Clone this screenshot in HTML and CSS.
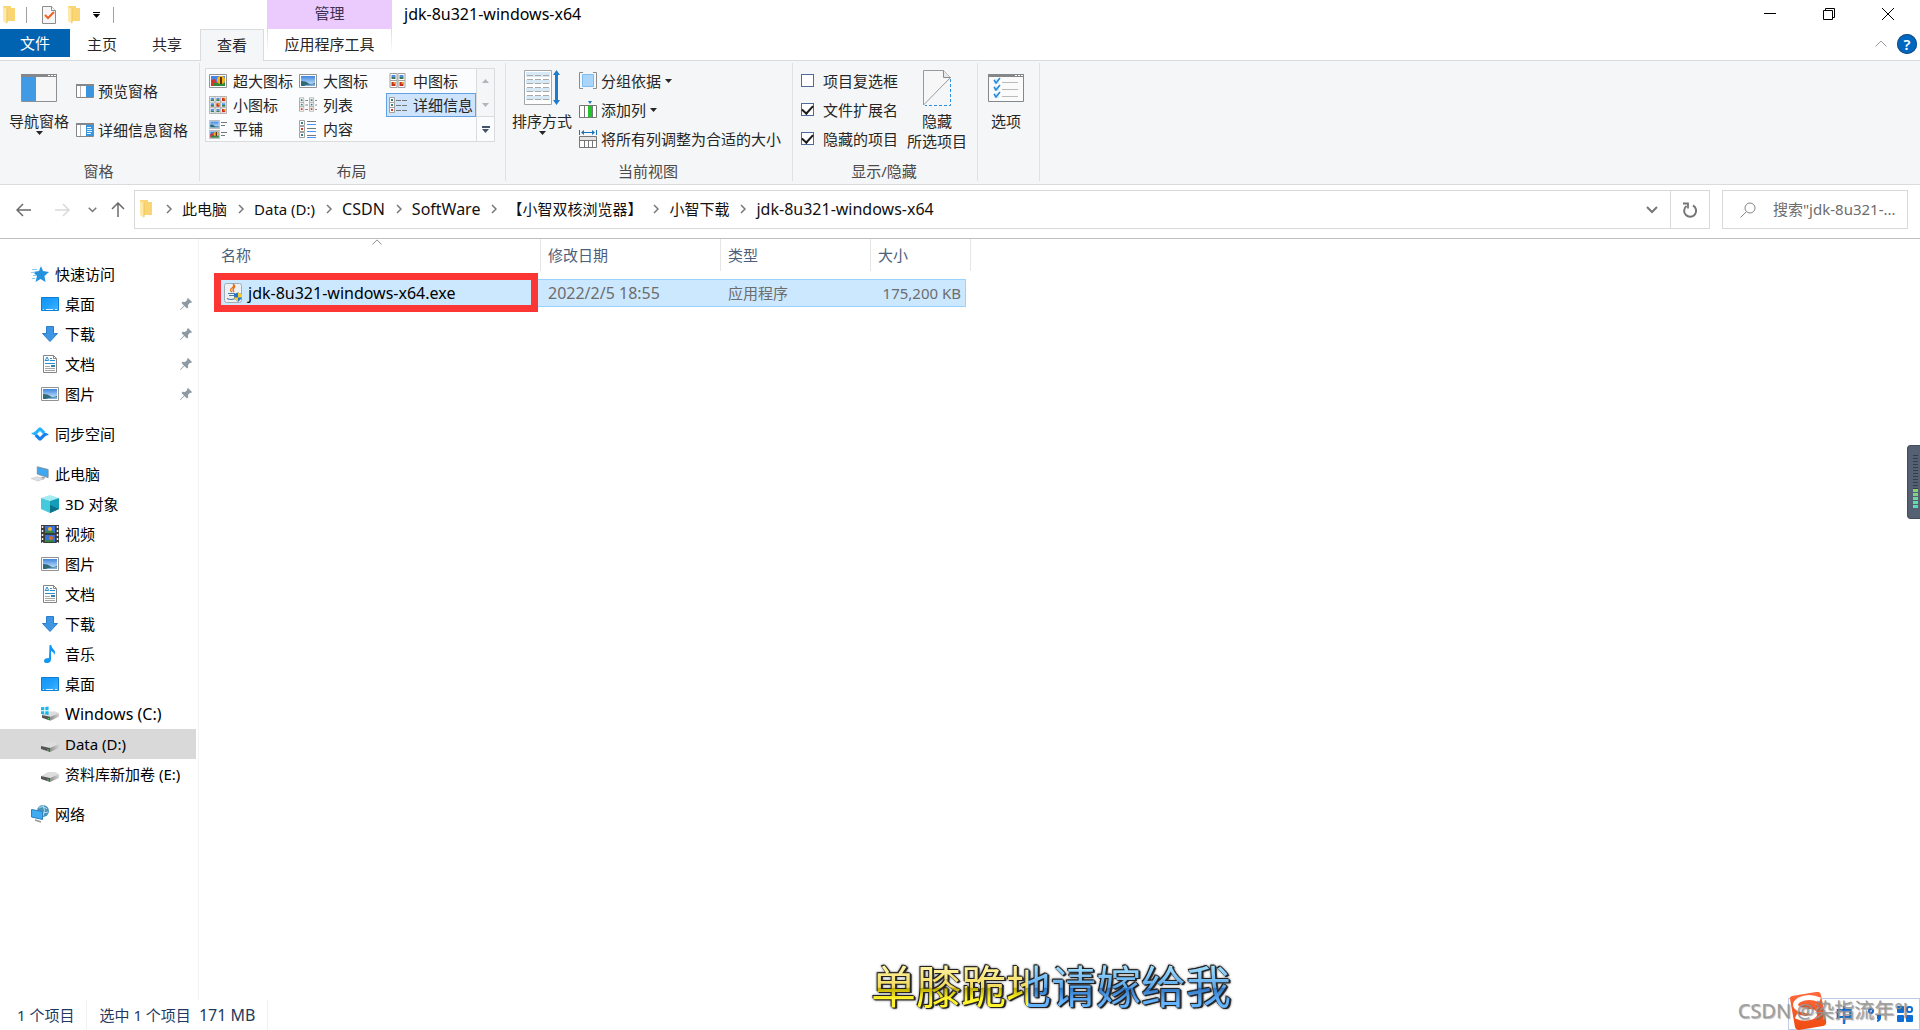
FILE: index.html
```html
<!DOCTYPE html>
<html lang="zh-CN">
<head>
<meta charset="utf-8">
<title>jdk-8u321-windows-x64</title>
<link rel="stylesheet" href="styles.css">
</head>
<body>
<svg class="sprite" aria-hidden="true">
  <defs>
    <linearGradient id="g-sky" x1="0" x2="0" y1="0" y2="1"><stop offset="0" stop-color="#3f86dd"/><stop offset="1" stop-color="#d8efff"/></linearGradient>
    <linearGradient id="g-desk" x1="0" x2="1" y1="0" y2="1"><stop offset="0" stop-color="#1493f5"/><stop offset="0.5" stop-color="#1fa0fc"/><stop offset="1" stop-color="#45b4ff"/></linearGradient>
    <linearGradient id="g-drive" x1="0" x2="1"><stop offset="0" stop-color="#8c8c8c"/><stop offset="1" stop-color="#d4d4d4"/></linearGradient>
    <linearGradient id="g-logo" x1="0" x2="0" y1="0" y2="1"><stop offset="0" stop-color="#ff6a3c"/><stop offset="1" stop-color="#f04a12"/></linearGradient>
  </defs>
  <symbol id="folder" viewBox="0 0 12 18"><path d="M0 0h8v2h4v13H0z" fill="#f9d673"/><path d="M0 1l4 2v15l-4-3z" fill="#ffe9a8"/><path d="M4 3v14" stroke="#eec45a"/></symbol>
  <symbol id="doc-check" viewBox="0 0 14 18"><path d="M.5.5h9l4 4v13H.5z" fill="#f6f6f6" stroke="#8c8c8c"/><path d="M9.500.5v4h4" fill="#fff" stroke="#8c8c8c"/><path d="M3 9l3 3 6-6" fill="none" stroke="#ee6220" stroke-width="2"/></symbol>
  <symbol id="caret" viewBox="0 0 7 4"><path d="M0 0h7L3.500 4z" fill="currentColor"/></symbol>
  <symbol id="chev-right" viewBox="0 0 6 10"><path d="M1 1l4 4-4 4" fill="none" stroke="#777" stroke-width="1.500"/></symbol>
  <symbol id="chev-down" viewBox="0 0 12 8"><path d="M1 1l5 5 5-5" fill="none" stroke="#777" stroke-width="2"/></symbol>
  <symbol id="chev-up" viewBox="0 0 12 7"><path d="M.5 6.500L6 1l5.500 5.500" fill="none" stroke="currentColor"/></symbol>
  <symbol id="arrow" viewBox="0 0 16 14"><path d="M1 7h14M7 1L1 7l6 6" fill="none" stroke="currentColor" stroke-width="1.500"/></symbol>
  <symbol id="nav-pane" viewBox="0 0 36 28"><path d="M.5.5h35v27H.5z" fill="#f7f7f7" stroke="#8d8f92"/><path d="M0 0h36v3H0z" fill="#85878a"/><path d="M27 1h2v1h-2zM30 1h2v1h-2zM33 1h2v1h-2z" fill="#fff"/><path d="M1 3h14v24H1z" fill="#419be4"/></symbol>
  <symbol id="pane-prev" viewBox="0 0 18 14"><path d="M.5.5h17v13H.5z" fill="#fff" stroke="#85878a"/><path d="M0 0h18v2H0z" fill="#85878a"/><path d="M4.500 2v11" stroke="#b5b5b5"/><path d="M10 2h7v11h-7z" fill="#3a94de"/></symbol>
  <symbol id="pane-det" viewBox="0 0 18 14"><use href="#pane-prev"/><path d="M11 4.500h4M11 6.500h5M11 8.500h5M11 10.500h4" stroke="#e5f4ff"/></symbol>
  <symbol id="picture" viewBox="0 0 18 14"><path d="M.5.5h17v13H.5z" fill="#fff" stroke="#929292"/><path d="M2 2h14v10H2z" fill="url(#g-sky)"/><path d="M2 7q5 0 7 2t7 0v3H2z" fill="#2e6a78"/><path d="M7 11l9-1v2H5z" fill="#7fb1d8"/></symbol>
  <symbol id="huge" viewBox="0 0 18 14"><path d="M.5.5h17v13H.5z" fill="#fff" stroke="#929292"/><path d="M2 2h14v10H2z" fill="#4785ec"/><path d="M2 6l4-1 2 4v3H2z" fill="#d4372c"/><path d="M5 9h11v3H5z" fill="#318c3a"/><circle cx="12" cy="6" r="4" fill="#f6b716"/><path d="M11 3h2v7h-2z" fill="#5c2b12"/></symbol>
  <symbol id="thumb" viewBox="0 0 8 8"><path d="M.5.500h7v7h-7z" fill="#fff" stroke="#a0a0a0"/><path d="M2 2h4v2H2z" fill="#4c8fe0"/><path d="M2 4h4v2H2z" fill="#3b7b60"/></symbol>
  <symbol id="thumb-r" viewBox="0 0 8 8"><path d="M.5.500h7v7h-7z" fill="#fff" stroke="#a0a0a0"/><path d="M2 2h4v4H2z" fill="#c92e20"/><path d="M4 2h2v2H4z" fill="#e8a126"/></symbol>
  <symbol id="medium" viewBox="0 0 18 16"><use href="#thumb" width="9" height="8"/><use href="#thumb" x="8" width="9" height="8"/><use href="#thumb-r" y="7" width="9" height="8"/><use href="#thumb-r" x="8" y="7" width="9" height="8"/></symbol>
  <symbol id="small" viewBox="0 0 19 19"><use href="#thumb" width="7" height="7"/><use href="#thumb" x="6" width="7" height="7"/><use href="#thumb-r" x="12" width="7" height="7"/><use href="#thumb" y="6" width="7" height="7"/><use href="#thumb-r" x="6" y="6" width="7" height="7"/><use href="#thumb" x="12" y="6" width="7" height="7"/><use href="#thumb" y="12" width="7" height="7"/><use href="#thumb" x="6" y="12" width="7" height="7"/><use href="#thumb-r" x="12" y="12" width="7" height="7"/></symbol>
  <symbol id="mini" viewBox="0 0 6 6"><path d="M.5.500h5v5h-5z" fill="#fff" stroke="#a0a0a0"/><path d="M2 2h2v2H2z" fill="#3b7f80"/></symbol>
  <symbol id="mini-r" viewBox="0 0 6 6"><path d="M.5.500h5v5h-5z" fill="#fff" stroke="#a0a0a0"/><path d="M2 2h2v2H2z" fill="#c9401f"/></symbol>
  <symbol id="list" viewBox="0 0 20 17"><use href="#mini" width="6" height="6"/><use href="#mini" y="5" width="6" height="6"/><use href="#mini-r" y="10" width="6" height="6"/><use href="#mini" x="11" width="6" height="6"/><use href="#mini" x="11" y="5" width="6" height="6"/><use href="#mini-r" x="11" y="10" width="6" height="6"/><path d="M7 3.500h3M7 8.500h3M7 13.500h3M18 3.500h2M18 8.500h2M18 13.500h2" stroke="#777"/></symbol>
  <symbol id="details" viewBox="0 0 18 17"><use href="#mini" width="6" height="6"/><use href="#mini" y="5" width="6" height="6"/><use href="#mini-r" y="10" width="6" height="6"/><path d="M7 3.500h5M13 3.500h5M7 8.500h5M13 8.500h5M7 13.500h5M13 13.500h5" stroke="#777"/></symbol>
  <symbol id="tiles" viewBox="0 0 18 19"><use href="#picture" width="11" height="9"/><use href="#huge" y="10" width="11" height="9"/><path d="M12 2.500h6M12 5.500h4M12 12.500h6M12 15.500h4" stroke="#777"/></symbol>
  <symbol id="content" viewBox="0 0 18 19"><use href="#mini" width="6" height="6"/><use href="#mini-r" y="6" width="6" height="6"/><use href="#mini" y="12" width="6" height="6"/><path d="M8 1.500h9M8 8.500h9M8 15.500h9" stroke="#777"/><path d="M8 4.500h9M8 11.500h9M8 17.500h9" stroke="#4c93f5"/></symbol>
  <symbol id="sort" viewBox="0 0 36 36"><path d="M.5.500h27v34H.5z" fill="#fff" stroke="#a4a6a8"/><path d="M2 2h24v5H2zM2 10h24v4H2zM2 18h24v4H2zM2 26h24v4H2z" fill="#d7e9f4"/><path d="M3 5.500h22M3 9.500h22M3 13.500h22M3 17.500h22M3 21.500h22M3 25.500h22M3 29.500h22" stroke="#aaa" stroke-dasharray="6 2"/><path d="M32.500 0L36 5h-2v25h2l-3.500 5L29 30h2V5h-2z" fill="#217bcd"/></symbol>
  <symbol id="group" viewBox="0 0 18 17"><path d="M4 .5H.5v16H4M14 .5h3.500v16H14" fill="none" stroke="#8c8c8c"/><path d="M3.500 2.500h11v12h-11z" fill="#a9d5fa" stroke="#7dbdf0"/></symbol>
  <symbol id="addcol" viewBox="0 0 18 17"><path d="M9 0h4l-2 3z" fill="#1d74b8"/><path d="M.5 4.500h17v12H.5zM5.500 4.500v12M9.500 4.500v12M13.500 4.500v12" fill="#fff" stroke="#777"/><path d="M9 5h4v11H9z" fill="#22c32c"/></symbol>
  <symbol id="fitcol" viewBox="0 0 18 18"><path d="M.5 0v5M17.500 0v5M3 2.500h12" stroke="#1d74b8"/><path d="M5 0v5L2 2.500zM13 0v5l3-2.500z" fill="#1d74b8"/><path d="M.5 6.500h17v11H.5zM.5 10.500h17M5.500 11v6M9.500 11v6M13.500 11v6" fill="#fff" stroke="#777"/><path d="M1 7h16v3H1z" fill="#e3e3e3"/></symbol>
  <symbol id="hide" viewBox="0 0 28 36"><path d="M20.500.500H.5V35L27.500 8z" fill="#f7f7f7"/><path d="M.5 35V.5h20l7 7L.5 35" fill="none" stroke="#9a9a9a"/><path d="M20.500.500v7h7" fill="#e8e8e8" stroke="#8c8c8c"/><path d="M27.500 9v26.500H2" fill="none" stroke="#2b8fe0" stroke-dasharray="3 2"/></symbol>
  <symbol id="options" viewBox="0 0 36 28"><path d="M.5.500h35v27H.5z" fill="#fbfbfb" stroke="#85878a"/><path d="M0 0h36v3H0z" fill="#85878a"/><path d="M27 1h2v1h-2zM30 1h2v1h-2zM33 1h2v1h-2z" fill="#fff"/><path d="M6 5h5v5H6zM6 12h5v5H6zM6 19h5v5H6z" fill="#d6ebfb"/><path d="M6 6l2 3 4-5M6 13l2 3 4-5M6 20l2 3 4-5" fill="none" stroke="#2787d8" stroke-width="1.500"/><path d="M14 8.500h16M14 15.500h16M14 22.500h16" stroke="#bbb"/></symbol>
  <symbol id="star" viewBox="0 0 18 16"><path d="M10 0l2 5 6 1-4.500 4 1 6-5-3-5 3 1.500-6L2 6l6-1z" fill="#2592dd"/><path d="M1 3.500h5M0 6.500h4M2 9.500h3M1 12.500h3" stroke="#8ccbf3"/></symbol>
  <symbol id="desktop" viewBox="0 0 18 14"><path d="M.5.500h17v13H.5z" fill="url(#g-desk)" stroke="#0d7ed6"/><path d="M2 12.500h1M5 12.500h7M14 12.500h2" stroke="#dff2ff"/></symbol>
  <symbol id="download" viewBox="0 0 18 18"><path d="M5.500 1.500h7v7h4L9 16.500 1.500 8.500h4z" fill="#3e95e4" stroke="#2b7ccb"/></symbol>
  <symbol id="document" viewBox="0 0 16 18"><path d="M1.500.500h10l3 3v14h-13z" fill="#fff" stroke="#858585"/><path d="M11.500.500v3h3" fill="none" stroke="#858585"/><path d="M3 5.500h3M8 3.500h2M8 5.500h5M3 8.500h10" stroke="#2a8fd6"/><path d="M3 6l2-4 2 4" fill="none" stroke="#2a8fd6"/><path d="M3 11.500h5M3 13.500h10M3 15.500h10" stroke="#a5a5a5"/><path d="M9 10h4v2H9z" fill="#3a7fa8"/></symbol>
  <symbol id="sync" viewBox="0 0 18 14"><path d="M0 6q3 0 4.500-2L7.500 1Q9-.5 10.500 1l4 4-2.500 2-3-3-4 4Q3 9 0 6z" fill="#28b3fb"/><path d="M18 8q-3 0-4.500 2l-3 3q-1.500 1.500-3 0l-4-4L6 7l3 3 4-4q2-1 5 2z" fill="#187ff0"/></symbol>
  <symbol id="pc" viewBox="0 0 20 18"><path d="M7 1l12 3v9L7 9z" fill="#3fa8f0" stroke="#7d8c99"/><path d="M12 12l4 1-2 2h-4z" fill="#9aa0a5"/><path d="M0 14l7-2 7 2-6 3z" fill="#dcdfe2" stroke="#b9bdc1" stroke-width=".5"/></symbol>
  <symbol id="cube" viewBox="0 0 18 18"><path d="M0 3l9-3 9 3-9 3z" fill="#a6eaf2"/><path d="M0 3l9 3v12l-9-4z" fill="#45c9dd"/><path d="M18 3L9 6v12l9-4z" fill="#139db8"/><path d="M9 10l9 4-9 4z" fill="#0b7289"/></symbol>
  <symbol id="video" viewBox="0 0 18 18"><path d="M0 0h18v18H0z" fill="#3c3c3c"/><path d="M4 1h10v7H4zM4 10h10v7H4z" fill="#3773d9"/><path d="M5 6h8v2H5zM5 15h8v2H5z" fill="#2f8742"/><circle cx="9" cy="4" r="2" fill="#f0b31d"/><circle cx="10" cy="13" r="2" fill="#dc6a1e"/><path d="M1.500 1v17M16.500 1v17" stroke="#eee" stroke-width="1.500" stroke-dasharray="2 2"/></symbol>
  <symbol id="music" viewBox="0 0 18 18"><path d="M8.500 0h1.500q1 3 3 5t0 5q0-3-3-4v8q0 4-4 4-3 0-3-2 0-3 5-3z" fill="#0f97f5"/></symbol>
  <symbol id="drive" viewBox="0 0 18 10"><path d="M0 4l7-4h7l4 2-9 4z" fill="#ddd"/><path d="M0 4l9 2v4L0 7z" fill="#555"/><path d="M9 6l9-4v4l-9 4z" fill="url(#g-drive)"/><circle cx="7" cy="8" r=".8" fill="#3fe04a"/></symbol>
  <symbol id="drive-win" viewBox="0 0 19 16"><use href="#drive" x="1" y="5" width="18" height="10"/><path d="M0 1l3.500-.5v3.500H0zM4.500.500L8 0v4H4.500zM0 5h3.500v3.500L0 8zM4.500 5H8v4l-3.500-.5z" fill="#17b7ec"/></symbol>
  <symbol id="network" viewBox="0 0 18 18"><circle cx="12" cy="6" r="6" fill="#4b92b9"/><path d="M8 3q4-3 8 1M7 7q5 2 10 0M12 0q3 5 0 11" fill="none" stroke="#b9dced"/><path d="M.5 4.500l11 2v8L.5 12z" fill="#3fabf2" stroke="#2981bd"/><path d="M4 15l6 2" stroke="#999" stroke-width="1.500"/></symbol>
  <symbol id="pin" viewBox="0 0 12 12"><path d="M8 0l4 4-1 1-1-.3L8 7l.2 2.500L7 10.500 4.500 8 .5 12 0 11.500 4 7.500 1.500 5l1-1.200L5 4l2.300-2L7 1z" fill="#8d99a3"/></symbol>
  <symbol id="java" viewBox="0 0 18 20"><rect x=".5" y=".5" width="17" height="19" rx="2" fill="#eef1f4" stroke="#a3adb8"/><path d="M8 9Q5 7 8 5t1-4q3 2 1 4t0 4" fill="none" stroke="#e76f1c" stroke-width="1.300"/><path d="M4 10.500h7M5 12.500h5M3 15.500q4 2 8 0" fill="none" stroke="#4e7ba5" stroke-width="1.200"/><path d="M10 11l4-1.500 4 1.500v4l-4 4-4-4z" fill="#2576c8"/><path d="M14 9.500l4 1.500v3.500h-4zM10 14.500h4V19l-4-4z" fill="#f8cb2e"/></symbol>
  <symbol id="search" viewBox="0 0 16 16"><circle cx="10" cy="6" r="5" fill="none" stroke="#858585"/><path d="M6.500 9.500L.5 15.500" stroke="#858585"/></symbol>
  <symbol id="refresh" viewBox="0 0 16 16"><path d="M11 3.500a6 6 0 1 1-6.500.5" fill="none" stroke="#757575" stroke-width="2"/><path d="M1 1.500h5v5" fill="none" stroke="#757575" stroke-width="1.800"/></symbol>
</svg>

<header class="titlebar">
  <div class="quick">
    <svg class="i12x18"><use href="#folder"/></svg>
    <span class="vbar"></span>
    <button class="plain" aria-label="属性"><svg class="i14x18"><use href="#doc-check"/></svg></button>
    <button class="plain" aria-label="新建文件夹"><svg class="i12x18"><use href="#folder"/></svg></button>
    <button class="plain customize" aria-label="自定义快速访问工具栏"><svg class="caret"><use href="#caret"/></svg></button>
    <span class="vbar last"></span>
  </div>
  <div class="context">管理</div>
  <div class="caption">
    <h1>jdk-8u321-windows-x64</h1>
    <div class="controls">
      <button class="plain" aria-label="最小化"><svg width="12" height="12"><path d="M0 5.500h12" stroke="#000"/></svg></button>
      <button class="plain" aria-label="还原"><svg width="12" height="12"><path d="M.5 2.500h9v9h-9zM2.500 2.500v-2h9v9h-2" fill="none" stroke="#000"/></svg></button>
      <button class="plain" aria-label="关闭"><svg width="12" height="12"><path d="M0 0l12 12M12 0L0 12" stroke="#000"/></svg></button>
    </div>
  </div>
  <button class="tab file">文件</button>
  <button class="tab">主页</button>
  <button class="tab">共享</button>
  <button class="tab active">查看</button>
  <span class="line"></span>
  <button class="tab tool">应用程序工具</button>
  <div class="help">
    <button class="plain fold" aria-label="折叠功能区"><svg class="i12x7"><use href="#chev-up"/></svg></button>
    <button class="question" aria-label="帮助">?</button>
  </div>
</header>

<section class="ribbon">
  <div class="group g-panes">
    <div class="body">
      <button class="big"><span class="pic"><svg width="36" height="28"><use href="#nav-pane"/></svg></span>导航窗格<svg class="caret"><use href="#caret"/></svg></button>
      <div class="stack wide">
        <button class="row"><svg width="18" height="14"><use href="#pane-prev"/></svg>预览窗格</button>
        <button class="row"><svg width="18" height="14"><use href="#pane-det"/></svg>详细信息窗格</button>
      </div>
    </div>
    <div class="label">窗格</div>
  </div>
  <div class="group g-layout">
    <div class="body">
      <div class="gallery">
        <button><svg width="18" height="14"><use href="#huge"/></svg>超大图标</button>
        <button><svg width="18" height="14"><use href="#picture"/></svg>大图标</button>
        <button><svg width="18" height="16"><use href="#medium"/></svg>中图标</button>
        <button><svg width="18" height="18"><use href="#small"/></svg>小图标</button>
        <button><svg width="18" height="16"><use href="#list"/></svg>列表</button>
        <button class="on"><svg width="18" height="17"><use href="#details"/></svg>详细信息</button>
        <button><svg width="18" height="19"><use href="#tiles"/></svg>平铺</button>
        <button><svg width="18" height="19"><use href="#content"/></svg>内容</button>
      </div>
      <div class="spin">
        <button aria-label="上一行"><svg class="caret flip"><use href="#caret"/></svg></button>
        <button aria-label="下一行"><svg class="caret"><use href="#caret"/></svg></button>
        <button class="more" aria-label="更多"><svg class="caret"><use href="#caret"/></svg></button>
      </div>
    </div>
    <div class="label">布局</div>
  </div>
  <div class="group g-view">
    <div class="body">
      <button class="big"><span class="pic"><svg width="36" height="36"><use href="#sort"/></svg></span>排序方式<svg class="caret"><use href="#caret"/></svg></button>
      <div class="stack">
        <button class="row"><svg width="18" height="17"><use href="#group"/></svg>分组依据<svg class="caret"><use href="#caret"/></svg></button>
        <button class="row"><svg width="18" height="17"><use href="#addcol"/></svg>添加列<svg class="caret"><use href="#caret"/></svg></button>
        <button class="row"><svg width="18" height="18"><use href="#fitcol"/></svg>将所有列调整为合适的大小</button>
      </div>
    </div>
    <div class="label">当前视图</div>
  </div>
  <div class="group g-show">
    <div class="body">
      <div class="stack">
        <label class="check"><input type="checkbox">项目复选框</label>
        <label class="check"><input type="checkbox" checked>文件扩展名</label>
        <label class="check"><input type="checkbox" checked>隐藏的项目</label>
      </div>
      <button class="big"><span class="pic"><svg width="28" height="36"><use href="#hide"/></svg></span><span>隐藏<br>所选项目</span></button>
    </div>
    <div class="label">显示/隐藏</div>
  </div>
  <div class="group g-options">
    <div class="body">
      <button class="big"><span class="pic"><svg width="36" height="28"><use href="#options"/></svg></span>选项</button>
    </div>
  </div>
</section>

<div class="address">
  <div class="history">
    <button class="plain" aria-label="后退"><svg width="16" height="14"><use href="#arrow"/></svg></button>
    <button class="plain off" aria-label="前进"><svg class="mirror" width="16" height="14"><use href="#arrow"/></svg></button>
    <button class="plain recent" aria-label="最近"><svg width="9" height="6"><use href="#chev-down"/></svg></button>
    <button class="plain up" aria-label="向上"><svg class="turn" width="16" height="14"><use href="#arrow"/></svg></button>
  </div>
  <div class="pathbox">
    <nav class="crumbs">
      <svg class="i12x18"><use href="#folder"/></svg>
      <svg class="sep first"><use href="#chev-right"/></svg><a href="#pc">此电脑</a>
      <svg class="sep"><use href="#chev-right"/></svg><a href="#d">Data (D:)</a>
      <svg class="sep"><use href="#chev-right"/></svg><a class="latin" href="#csdn">CSDN</a>
      <svg class="sep"><use href="#chev-right"/></svg><a class="latin" href="#soft">SoftWare</a>
      <svg class="sep"><use href="#chev-right"/></svg><a href="#browser">【小智双核浏览器】</a>
      <svg class="sep"><use href="#chev-right"/></svg><a href="#dl">小智下载</a>
      <svg class="sep"><use href="#chev-right"/></svg><a class="latin" href="#jdk">jdk-8u321-windows-x64</a>
    </nav>
    <button class="plain drop" aria-label="历史位置"><svg width="12" height="8"><use href="#chev-down"/></svg></button>
    <button class="plain refresh" aria-label="刷新"><svg width="16" height="16"><use href="#refresh"/></svg></button>
  </div>
  <label class="search"><svg width="16" height="16"><use href="#search"/></svg><input type="text" aria-label="搜索" placeholder="搜索&quot;jdk-8u321-..."></label>
</div>

<main class="content">
  <nav class="tree">
    <a class="root" href="#quick"><svg width="18" height="16"><use href="#star"/></svg>快速访问</a>
    <a href="#q1"><svg width="18" height="14"><use href="#desktop"/></svg>桌面<svg class="pin"><use href="#pin"/></svg></a>
    <a href="#q2"><svg width="18" height="18"><use href="#download"/></svg>下载<svg class="pin"><use href="#pin"/></svg></a>
    <a href="#q3"><svg width="18" height="18"><use href="#document"/></svg>文档<svg class="pin"><use href="#pin"/></svg></a>
    <a href="#q4"><svg width="18" height="14"><use href="#picture"/></svg>图片<svg class="pin"><use href="#pin"/></svg></a>
    <a class="root" href="#sync"><svg width="18" height="14"><use href="#sync"/></svg>同步空间</a>
    <a class="root" href="#pc"><svg width="18" height="18"><use href="#pc"/></svg>此电脑</a>
    <a href="#p1"><svg width="18" height="18"><use href="#cube"/></svg>3D 对象</a>
    <a href="#p2"><svg width="18" height="18"><use href="#video"/></svg>视频</a>
    <a href="#p3"><svg width="18" height="14"><use href="#picture"/></svg>图片</a>
    <a href="#p4"><svg width="18" height="18"><use href="#document"/></svg>文档</a>
    <a href="#p5"><svg width="18" height="18"><use href="#download"/></svg>下载</a>
    <a href="#p6"><svg width="18" height="18"><use href="#music"/></svg>音乐</a>
    <a href="#p7"><svg width="18" height="14"><use href="#desktop"/></svg>桌面</a>
    <a class="latin" href="#p8"><svg width="18" height="16"><use href="#drive-win"/></svg>Windows (C:)</a>
    <a class="current" href="#p9"><svg class="low" width="18" height="10"><use href="#drive"/></svg>Data (D:)</a>
    <a href="#p10"><svg class="low" width="18" height="10"><use href="#drive"/></svg>资料库新加卷 (E:)</a>
    <a class="root" href="#net"><svg width="18" height="18"><use href="#network"/></svg>网络</a>
  </nav>
  <section class="files">
    <table>
      <colgroup><col class="c-name"><col class="c-date"><col class="c-type"><col class="c-size"></colgroup>
      <thead>
        <tr><th>名称<svg class="sorted"><use href="#chev-up"/></svg></th><th>修改日期</th><th>类型</th><th>大小</th></tr>
      </thead>
      <tbody>
        <tr>
          <td><div class="cell name latin"><svg width="18" height="20"><use href="#java"/></svg>jdk-8u321-windows-x64.exe<span class="mark"></span></div></td>
          <td><div class="cell latin">2022/2/5 18:55</div></td>
          <td><div class="cell">应用程序</div></td>
          <td><div class="cell size">175,200 KB</div></td>
        </tr>
      </tbody>
    </table>
  </section>
</main>

<footer class="status"><span>1 个项目</span><span class="picked">选中 1 个项目</span><span class="bytes latin">171 MB</span></footer>

<div class="lyric">单膝跪地请嫁给我</div>
<div class="meter"><span class="idle"></span><span class="level"></span></div>
<div class="ime">
  <svg class="logo" viewBox="0 0 40 38"><path d="M3 7Q2 5 5 4L29 0q4-1 5 3l5 26q1 4-3 5l-24 4q-3 0-4-3z" fill="url(#g-logo)"/><path d="M33 8Q22 3 12 8q-7 5 0 9 6 2 14 3 4 2-1 5-8 3-16-1" fill="none" stroke="#fff" stroke-width="5"/></svg>
  <span class="zh">中</span>
  <svg class="punct" width="16" height="16"><circle cx="4" cy="5" r="2" fill="none" stroke="#0b6fd8" stroke-width="2"/><path d="M10 9h4v3q0 3-4 4v-2l1-1h-1z" fill="#0b6fd8"/></svg>
  <svg class="apps" width="16" height="16"><rect width="7" height="7" rx="1" fill="#0b6fd8"/><rect y="9" width="7" height="7" rx="1" fill="#0b6fd8"/><rect x="9" y="9" width="7" height="7" rx="1" fill="#0b6fd8"/><rect x="10" y="1" width="5" height="5" rx="2" fill="none" stroke="#0b6fd8" stroke-width="2"/></svg>
</div>
<div class="credit">CSDN @染指流年°l</div>
</body>
</html>
```
FILE: styles.css
```css
* { box-sizing: border-box; }
html, body { height: 100%; }
body {
  margin: 0;
  min-height: 100vh;
  display: flex;
  flex-direction: column;
  overflow: hidden;
  position: relative;
  background: #fff;
  color: #000;
  font: 15px/20px "Noto Sans", "Noto Sans CJK SC", sans-serif;
}
svg { flex: none; display: block; }
button, input { font: inherit; color: inherit; }
button { border: 0; padding: 0; margin: 0; background: none; white-space: nowrap; }
a { color: inherit; text-decoration: none; }
.latin { font-size: 16px; }
.sprite { position: absolute; width: 0; height: 0; }
.plain { display: flex; align-items: center; justify-content: center; }
.caret { width: 7px; height: 4px; }
.i12x18 { width: 12px; height: 18px; }
.i14x18 { width: 14px; height: 18px; }
.i12x7 { width: 12px; height: 7px; }

/* Title bar and tabs */
.titlebar {
  flex: none;
  display: grid;
  grid-template-columns: 70px 64px 66px 64px 3px 125px 1fr;
  grid-template-rows: 29px 32px;
}
.quick { grid-column: 1 / 6; display: flex; align-items: center; padding-left: 3px; }
.vbar { width: 1px; height: 16px; margin: 0 15px 0 11px; background: #a0a0a0; }
.quick .plain + .plain { margin-left: 12px; }
.quick .customize { width: 7px; height: 6px; border-top: 1px solid #000; align-items: end; }
.quick .plain + .customize { margin-left: 13px; }
.vbar.last { margin: 0 0 0 13px; }
.context { background: #ebcbfd; color: #41304d; text-align: center; line-height: 26px; }
.caption { display: flex; align-items: center; justify-content: space-between; padding: 0 3px 2px 12px; }
.caption h1 { margin: 0; font-size: 16px; font-weight: 400; }
.controls { display: flex; }
.controls .plain { width: 59px; height: 27px; }
.tab { padding-bottom: 2px; border-bottom: 1px solid #dadbdc; color: #262626; }
.tab.file { height: 28px; border: 0; background: #0063b1; color: #fff; align-self: start; }
.tab.file { padding-bottom: 0; box-shadow: 0 3px #fff, 0 4px #dadbdc; }
.tab.active { border: 1px solid #dadbdc; border-bottom: 0; background: #f5f6f7; }
.tab.tool {
  background:
    linear-gradient(#dadbdc, #fff 80%) left / 1px 100% no-repeat,
    linear-gradient(#dadbdc, #fff 80%) right / 1px 100% no-repeat;
}
.line, .help { border-bottom: 1px solid #dadbdc; }
.help { display: flex; align-items: center; justify-content: flex-end; gap: 10px; padding: 0 3px 2px 0; }
.fold { color: #999; }
.question { width: 20px; height: 20px; border-radius: 50%; background: #0067c0; box-shadow: inset 0 0 0 1px #1c4f80; color: #fff; font-weight: 600; }

/* Ribbon */
.ribbon { flex: none; display: flex; height: 124px; padding: 2px 0 3px; background: #f5f6f7; border-bottom: 1px solid #dadbdc; color: #262626; }
.group { display: flex; flex-direction: column; justify-content: space-between; border-right: 1px solid #e0e1e3; }
.g-panes { width: 200px; }
.g-layout { width: 306px; }
.g-view { width: 287px; }
.g-show { width: 185px; }
.g-options { width: 62px; }
.body { display: flex; }
.label { height: 20px; padding-right: 2px; text-align: center; color: #4a4a4a; }
.big { display: flex; flex-direction: column; align-items: center; height: 90px; padding-top: 7px; line-height: 20px; }
.big .pic { display: flex; align-items: center; height: 36px; margin-bottom: 5px; }
.stack { display: flex; flex-direction: column; padding-top: 3px; }
.row { display: flex; align-items: center; gap: 4px; height: 29px; }
.wide { padding-top: 8px; }
.wide .row { height: 39px; }
.g-panes .big { margin: 0 7px 0 9px; }
.g-view .big { margin: 0 7px 0 6px; }
.g-show .stack { padding-left: 8px; }
.g-show .big { margin-left: 9px; }
.g-options .big { margin-left: 10px; }
.check { display: flex; align-items: center; gap: 9px; height: 29px; white-space: nowrap; }
.check input { appearance: none; flex: none; width: 13px; height: 13px; margin: 0; border: 1px solid #51699b; background: #fff; display: grid; place-items: center; }
.check input:checked::before { content: ""; width: 9px; height: 5px; margin-bottom: 3px; border: solid #1b1b1b; border-width: 0 0 2px 2px; transform: rotate(-48deg); }
.gallery { display: grid; grid-template-columns: repeat(3, 90px); grid-auto-rows: 24px; margin: 5px 0 0 5px; border: 1px solid #dadbdc; background: #fafcfe; }
.gallery button { display: flex; align-items: center; gap: 6px; padding-left: 3px; }
.gallery button.on { box-shadow: inset 0 0 0 1px #62a2e4; background: #cde4fc; }
.spin { display: flex; flex-direction: column; width: 18px; margin-top: 5px; border: solid #dadbdc; border-width: 1px 1px 1px 0; color: #b2b6bb; }
.spin button { flex: 1; display: grid; place-content: center; }
.spin .more { color: #44546a; border-top: 1px solid #dadbdc; background: #fafcfe; }
.spin .more::before { content: ""; width: 8px; height: 2px; margin-bottom: 1px; background: #44546a; }
.flip { transform: rotate(180deg); }

/* Address bar */
.address { flex: none; display: flex; height: 54px; padding: 5px 12px 9px 0; border-bottom: 1px solid #c0c0c0; color: #262626; }
.history { display: flex; align-items: center; width: 134px; padding-left: 16px; color: #6a6a6a; }
.history .off { margin-left: 22px; color: #d9d9d9; }
.history .recent { margin-left: 18px; }
.history .up { margin-left: 13px; }
.mirror { transform: scaleX(-1); }
.turn { transform: rotate(90deg); }
.pathbox { flex: 1; display: flex; border: 1px solid #d9d9d9; margin-right: 12px; }
.crumbs { flex: 1; display: flex; align-items: center; padding: 0 0 2px 5px; color: #111; }
.sep { width: 6px; height: 10px; margin: 0 10px 0 11px; }
.sep.first { margin-left: 14px; }
.drop { width: 37px; }
.refresh { width: 39px; border-left: 1px solid #d9d9d9; }
.search { display: flex; align-items: center; width: 186px; padding-left: 17px; gap: 17px; border: 1px solid #d9d9d9; }
.search input { flex: 1; min-width: 0; padding: 0 0 2px; border: 0; outline: 0; background: none; }
.search input::placeholder { color: #6d6d6d; opacity: 1; }

/* Navigation tree */
.content { flex: 1; display: flex; min-height: 0; }
.tree { flex: none; width: 199px; padding: 20px 2px 0 0; border-right: 1px solid #f3f3f3; }
.tree a { display: flex; align-items: center; gap: 6px; height: 30px; padding-left: 41px; }
.tree .root { padding-left: 31px; margin-top: 10px; }
.tree .root:first-child { margin-top: 0; }
.tree .current { background: #d9d9d9; }
.tree .low { margin-top: 6px; }
.pin { width: 12px; height: 12px; margin-left: auto; margin-right: 4px; }

/* File list */
.files { flex: 1; padding-left: 15px; }
.files table { border-collapse: separate; border-spacing: 0; table-layout: fixed; width: 757px; }
.c-name { width: 327px; }
.c-date { width: 180px; }
.c-type { width: 150px; }
.c-size { width: 100px; }
.files th { position: relative; height: 32px; padding: 0 7px; border-right: 1px solid #e5e5e5; text-align: left; font-weight: 400; color: #4c607a; }
.sorted { position: absolute; top: 0; left: 50%; width: 10px; height: 6px; margin-left: -5px; color: #777; }
.files td { padding: 8px 0 0; }
.cell { height: 28px; padding-left: 7px; line-height: 26px; white-space: nowrap; background: #cce8ff; border: solid #99d1ff; border-width: 1px 0; color: #6d6d6d; }
.cell.name { position: relative; display: flex; align-items: center; gap: 6px; padding-left: 10px; color: #000; }
.cell.size { margin-right: 5px; padding-right: 4px; border-right-width: 1px; text-align: right; }
.mark { position: absolute; inset: -7px 3px -6px 0; border: 7px solid #fc3535; }

/* Status bar */
.status { flex: none; display: flex; height: 30px; padding-left: 17px; line-height: 30px; color: #1f3a5f; }
.status .picked { margin: 0 8px 0 12px; padding-left: 12px; border-left: 1px solid #f0f0f0; }
.status .bytes { padding-right: 12px; border-right: 1px solid #f0f0f0; }

/* Floating desktop items */
.lyric {
  position: absolute;
  left: 871px;
  bottom: 15px;
  font: 400 45px/60px "Noto Sans CJK SC", sans-serif;
  white-space: nowrap;
  color: transparent;
  background:
    linear-gradient(#fff3a0 20%, #f2d95c 54%, #b8a800 55%, #fff22e 72%) left / 157px 100% no-repeat,
    linear-gradient(#9bdcff 20%, #5ba6ea 54%, #2d74c4 55%, #65b4ff 78%) right / 203px 100% no-repeat;
  background-clip: text;
  filter: drop-shadow(1px 1px 0 #222) drop-shadow(-1px -1px 0 #222) drop-shadow(1px 0 0 #333) drop-shadow(0 0 1px #777);
}
.meter { position: absolute; right: 0; top: 445px; width: 13px; height: 74px; padding: 9px 2px 9px 5px; border-radius: 4px 0 0 4px; background: #566073; border: 1px solid #434b5a; border-right: 0; display: flex; flex-direction: column; }
.idle { flex: 1; background: repeating-linear-gradient(#343c4b 0 1px, #566073 1px 3px); }
.level { height: 20px; background: repeating-linear-gradient(transparent 0 3px, #566073 3px 4px), linear-gradient(#8ed06d, #4fdfc4); }
.ime { position: absolute; right: 0; bottom: 0; width: 132px; height: 32px; border: 1px solid #b9cde8; background: #fff; display: flex; align-items: center; color: #0b6fd8; }
.ime .logo { width: 40px; height: 38px; margin: -6px 8px 0 -2px; }
.ime .zh { font: 700 18px/24px "Noto Sans CJK SC", sans-serif; }
.ime .punct { margin-left: 14px; }
.ime .apps { margin-left: 14px; }
.credit { position: absolute; right: 12px; bottom: 5px; font-size: 20px; line-height: 28px; color: rgba(150, 150, 150, .9); text-shadow: 1px 1px 1px rgba(90, 90, 90, .5); white-space: nowrap; }
```
